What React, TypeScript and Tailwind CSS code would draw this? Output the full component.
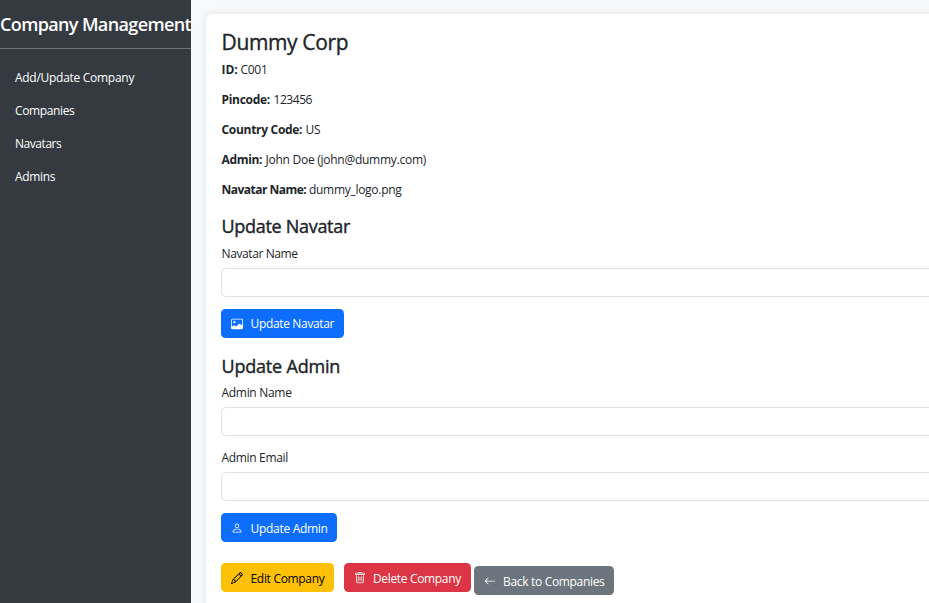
import React from "react";
import { BsArrowLeft, BsImage, BsPencil, BsPerson, BsTrash } from "react-icons/bs";

const links = [
  { label: "Add/Update Company", tracking: "tracking-[-0.28px]" },
  { label: "Companies", tracking: "tracking-[-0.38px]" },
  { label: "Navatars", tracking: "tracking-[-0.45px]" },
  { label: "Admins", tracking: "tracking-[-0.35px]" },
];

const details = [
  { name: "ID:", value: "C001", nameClass: "w-[19px] tracking-[-0.09px]", valueClass: "tracking-[-0.28px]" },
  { name: "Pincode:", value: "123456", nameClass: "w-[52px] tracking-[-0.3px]", valueClass: "tracking-[-0.45px]" },
  { name: "Country Code:", value: "US", nameClass: "w-[84px] tracking-[-0.3px]", valueClass: "tracking-[-0.16px]" },
  { name: "Admin:", value: "John Doe (john@dummy.com)", nameClass: "w-[44px] tracking-[-0.33px]", valueClass: "tracking-[-0.26px]" },
  { name: "Navatar Name:", value: "dummy_logo.png", nameClass: "w-[87.5px] tracking-[-0.52px]", valueClass: "tracking-[-0.29px]" },
];

function Field({ label, tracking }: { label: string; tracking: string }) {
  return (
    <label className="mb-3 block">
      <span className={`mb-[5px] ml-[0.5px] block h-[19px] pt-px ${tracking}`}>{label}</span>
      <input className="block h-[29px] w-full rounded-[4.5px] border border-[#dee2e6] bg-white px-2 outline-none" />
    </label>
  );
}

function Button({
  icon,
  label,
  className,
  labelClass = "pt-[2px]",
}: {
  icon: React.ReactNode;
  label: string;
  className: string;
  labelClass?: string;
}) {
  return (
    <button className={`flex h-[29px] shrink-0 items-center rounded-[4.5px] pl-[10px] whitespace-nowrap ${className}`}>
      <span className="mr-[7px] flex w-3 shrink-0 justify-center text-[12px]">{icon}</span>
      <span className={labelClass}>{label}</span>
    </button>
  );
}

export default function App() {
  return (
    <div className="flex h-[603px] w-[929px] overflow-hidden bg-[#f8f9fa] font-['Open_Sans','Noto_Sans',sans-serif] text-[12px] leading-[18px] text-[#212529]">
      <aside className="w-[191px] shrink-0 overflow-hidden bg-[#343a40] text-white">
        <h1 className="h-[49px] border-b border-[#6c7278] pt-[11px] text-[18px] leading-[27px] font-semibold tracking-[-0.63px] whitespace-nowrap">
          Company Management
        </h1>
        <nav className="flex flex-col gap-[15px] pt-5 pl-[15px]">
          {links.map((l) => (
            <a key={l.label} className={l.tracking}>
              {l.label}
            </a>
          ))}
        </nav>
      </aside>
      <main className="min-w-0 flex-1 pt-[14px] pl-[15px]">
        <section className="h-[620px] w-[760px] rounded-[6px] bg-white pt-[15px] pr-[15px] pl-[15px] shadow-[0_0_8px_rgba(0,0,0,0.1)]">
          <h2 className="mb-[6px] ml-[0.5px] h-[26px] text-[21px] leading-[26px] font-medium tracking-[-0.36px] [-webkit-text-stroke:0.35px]">
            Dummy Corp
          </h2>
          {details.map((d) => (
            <p key={d.name} className="mb-3 ml-[0.5px] flex whitespace-nowrap">
              <strong className={`shrink-0 font-bold ${d.nameClass}`}>{d.name}</strong>
              <span className={d.valueClass}>{d.value}</span>
            </p>
          ))}

          <h3 className="mt-[16px] mb-[7px] ml-[0.5px] h-[22px] text-[18px] leading-[22px] font-medium tracking-[-0.3px] [-webkit-text-stroke:0.4px]">
            Update Navatar
          </h3>
          <Field label="Navatar Name" tracking="tracking-[-0.4px]" />
          <Button
            icon={<BsImage />}
            label="Update Navatar"
            className="w-[123px] bg-[#0d6efd] tracking-[-0.34px] text-white"
            labelClass="ml-[0.5px]"
          />

          <h3 className="mt-[17px] mb-[6px] ml-[0.5px] h-[22px] text-[18px] leading-[22px] font-medium tracking-[-0.2px] [-webkit-text-stroke:0.4px]">
            Update Admin
          </h3>
          <Field label="Admin Name" tracking="tracking-[-0.3px]" />
          <Field label="Admin Email" tracking="tracking-[-0.33px]" />
          <Button
            icon={<BsPerson />}
            label="Update Admin"
            className="w-[116px] bg-[#0d6efd] tracking-[-0.3px] text-white"
            labelClass="ml-[0.5px] pt-[2px]"
          />

          <div className="mt-[21px] flex">
            <Button
              icon={<BsPencil />}
              label="Edit Company"
              className="mr-[10px] w-[113px] bg-[#ffc107] tracking-[-0.31px] text-black"
              labelClass="ml-[0.5px] pt-[2px]"
            />
            <Button icon={<BsTrash />} label="Delete Company" className="mr-[3px] w-[127px] bg-[#dc3545] tracking-[-0.34px] text-white" />
            <Button icon={<BsArrowLeft />} label="Back to Companies" className="mt-[3px] w-[140px] bg-[#6c757d] tracking-[-0.32px] text-white" />
          </div>
        </section>
      </main>
    </div>
  );
}
